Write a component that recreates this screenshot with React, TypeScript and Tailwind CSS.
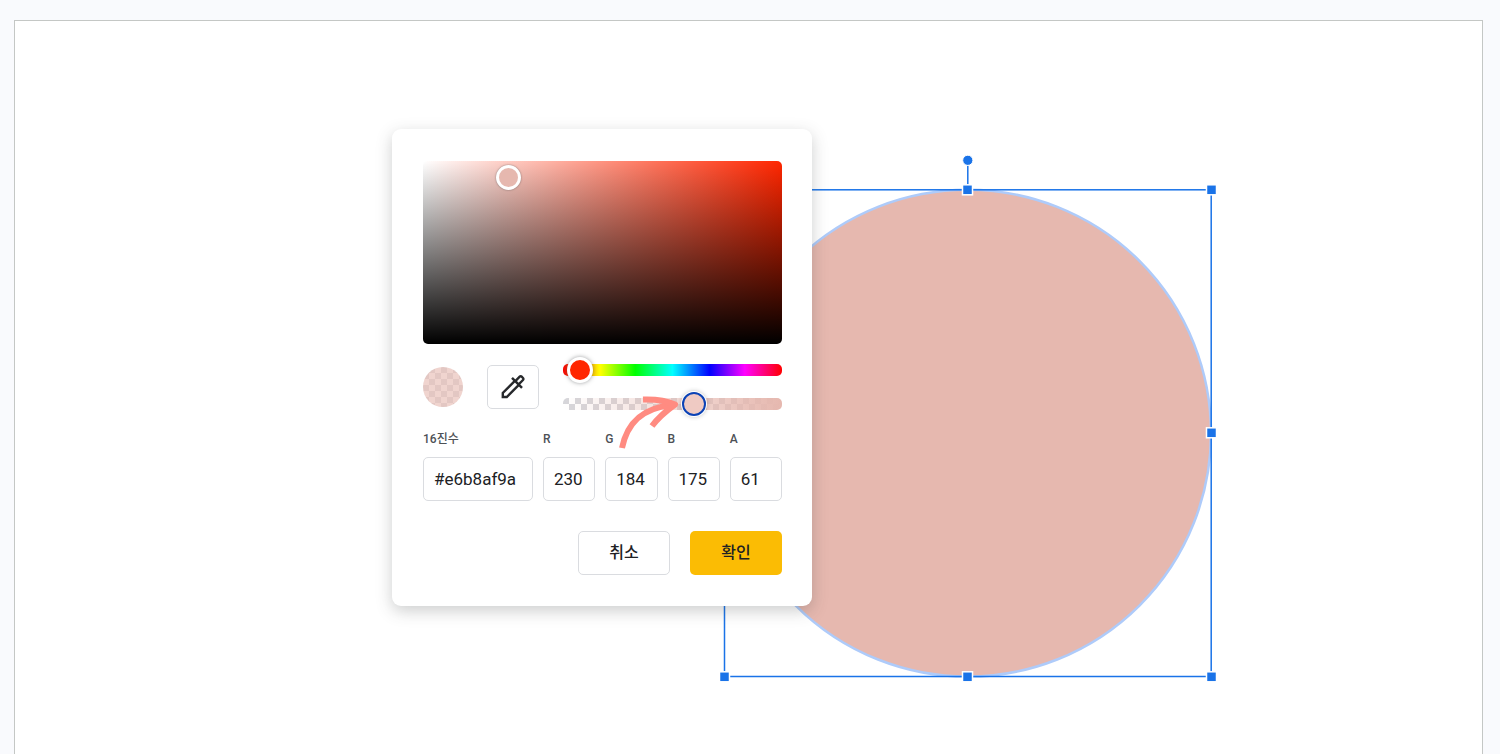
import { useState } from "react";

const HANDLES = [
  [10, 40],
  [253, 40],
  [497, 40],
  [10, 283],
  [497, 283],
  [10, 527],
  [253, 527],
  [497, 527],
];

function SelectedCircle() {
  return (
    <svg
      className="absolute left-[699px] top-[129px]"
      width="510"
      height="540"
      viewBox="0 0 510 540"
      aria-hidden="true"
    >
      <circle cx="253.6" cy="283.2" r="243.4" fill="#e6b8af" stroke="#aecbfa" strokeWidth="2.5" />
      <rect x="10.5" y="39.8" width="486.7" height="486.7" fill="none" stroke="#1a73e8" strokeWidth="1.5" />
      <path d="M253.8 16v20" stroke="#1a73e8" strokeWidth="1.5" />
      <circle cx="253.8" cy="10.3" r="5.1" fill="#1a73e8" stroke="#fff" />
      {HANDLES.map(([x, y]) => (
        <rect
          key={`${x}-${y}`}
          x={x - 4.5}
          y={y - 5.2}
          width="10"
          height="10"
          fill="#1a73e8"
          stroke="#fff"
          strokeWidth="1.5"
        />
      ))}
    </svg>
  );
}

function EyedropperIcon() {
  return (
    <svg width="26" height="26" viewBox="0 0 26 26" fill="none" stroke="#27292c" strokeWidth="2.4" aria-hidden="true">
      <path d="M14.6 7.2 2.8 19v4h4L18.6 11.2" />
      <path d="M12 3.8 22 13.8" />
      <path d="m15.6 6.8 4.1-4.1a1.4 1.4 0 0 1 2 0l1.3 1.3a1.4 1.4 0 0 1 0 2l-4.1 4.1" />
    </svg>
  );
}

function HintArrow() {
  return (
    <svg
      className="pointer-events-none absolute left-[223px] top-[261px]"
      width="68"
      height="64"
      viewBox="0 0 68 64"
      fill="none"
      stroke="#ff8b81"
      strokeWidth="6"
      aria-hidden="true"
    >
      <path d="M7 58C12 34 26 18 57 15" />
      <path d="M28 9.500C42 9 51 10.5 60 14.5C51 21 43 28 37 36" strokeLinejoin="round" />
    </svg>
  );
}

type FieldProps = {
  id: string;
  label: string;
  value: string;
  onChange: (value: string) => void;
};

function Field({ id, label, value, onChange }: FieldProps) {
  return (
    <div className="flex min-w-0 flex-col gap-2">
      <label htmlFor={id} className="text-xs leading-5 font-medium text-[#4d5156]">
        {label}
      </label>
      <input
        id={id}
        type="text"
        value={value}
        onChange={(e) => onChange(e.target.value)}
        className="h-11 w-full rounded-[5px] border border-[#dadce0] bg-white px-[10px] text-[17px] text-[#202124] outline-none focus:border-[#1a73e8]"
      />
    </div>
  );
}

export default function App() {
  const [hex, setHex] = useState("#e6b8af9a");
  const [red, setRed] = useState("230");
  const [green, setGreen] = useState("184");
  const [blue, setBlue] = useState("175");
  const [alpha, setAlpha] = useState("61");
  const [hue, setHue] = useState("8");

  return (
    <div className="flex min-h-screen flex-col bg-[#f9fafd] pt-5 pr-[17px] pl-[14px] font-[Roboto,'Noto_Sans_CJK_KR',sans-serif]">
      <main className="relative flex-1 overflow-hidden border border-b-0 border-[#c4c7c5] bg-white">
        <SelectedCircle />

        <section
          role="dialog"
          aria-label="맞춤 색상"
          className="absolute top-[108px] left-[377px] w-[420px] rounded-[9px] bg-white pt-8 pr-[30px] pb-[31px] pl-[31px] shadow-[0_5px_16px_rgba(60,64,67,0.26)]"
        >
          {/* Saturation / brightness */}
          <div className="relative h-[183px] rounded-[5px] bg-[linear-gradient(to_top,#000,transparent),linear-gradient(to_right,#fff,#ff2600)]">
            <button
              type="button"
              aria-label="채도 및 밝기"
              className="absolute top-1 left-[73px] size-[25px] rounded-full border-[3px] border-white bg-[#e6b8af] shadow-[0_0_2px_rgba(60,64,67,0.6)]"
            />
          </div>

          <div className="mt-5 flex items-center gap-6">
            <div className="size-10 shrink-0 rounded-full bg-[linear-gradient(#e6b8af9a,#e6b8af9a),repeating-conic-gradient(#dedee1_0_25%,#fff_0_50%)] bg-[length:100%_100%,12px_12px]" />
            <button
              type="button"
              aria-label="스포이트"
              className="flex h-11 w-[52px] shrink-0 items-center justify-center rounded-[5px] border border-[#dadce0] bg-white"
            >
              <EyedropperIcon />
            </button>
            <div className="flex min-w-0 flex-1 flex-col gap-[22px]">
              <input
                type="range"
                aria-label="색조"
                min="0"
                max="360"
                value={hue}
                onChange={(e) => setHue(e.target.value)}
                className="block h-3 w-full appearance-none rounded-[5px] bg-[linear-gradient(to_right,#f00,#ff0_17%,#0f0_33%,#0ff_50%,#00f_67%,#f0f_83%,#f00)] [&::-webkit-slider-thumb]:size-[26px] [&::-webkit-slider-thumb]:appearance-none [&::-webkit-slider-thumb]:rounded-full [&::-webkit-slider-thumb]:border-[3px] [&::-webkit-slider-thumb]:border-white [&::-webkit-slider-thumb]:bg-[#ff2600] [&::-webkit-slider-thumb]:shadow-[0_0_4px_rgba(60,64,67,0.5)]"
              />
              <input
                type="range"
                aria-label="투명도"
                min="0"
                max="100"
                value={alpha}
                onChange={(e) => setAlpha(e.target.value)}
                className="block h-3 w-full appearance-none rounded-[5px] bg-[linear-gradient(to_right,transparent,#e6b8af),repeating-conic-gradient(#fff_0_25%,#d6d6da_0_50%)] bg-[length:100%_100%,12px_12px] [&::-webkit-slider-thumb]:size-[24px] [&::-webkit-slider-thumb]:appearance-none [&::-webkit-slider-thumb]:rounded-full [&::-webkit-slider-thumb]:border-2 [&::-webkit-slider-thumb]:border-[#0b42b5] [&::-webkit-slider-thumb]:bg-[#efcac3] [&::-webkit-slider-thumb]:shadow-[0_0_0_1px_#fff,0_0_4px_1px_rgba(60,64,67,0.3)]"
              />
            </div>
          </div>

          <div className="mt-[19px] grid grid-cols-[110px_repeat(4,minmax(0,1fr))] gap-[10px]">
            <Field id="hex" label="16진수" value={hex} onChange={setHex} />
            <Field id="red" label="R" value={red} onChange={setRed} />
            <Field id="green" label="G" value={green} onChange={setGreen} />
            <Field id="blue" label="B" value={blue} onChange={setBlue} />
            <Field id="alpha" label="A" value={alpha} onChange={setAlpha} />
          </div>

          <div className="mt-[30px] flex justify-end gap-5">
            <button
              type="button"
              className="h-11 w-[92px] rounded-[5px] border border-[#dadce0] bg-white text-base font-medium text-[#202124]"
            >
              취소
            </button>
            <button
              type="button"
              className="h-11 w-[92px] rounded-[5px] bg-[#fbbc04] text-base font-medium text-[#202124]"
            >
              확인
            </button>
          </div>

          <HintArrow />
        </section>
      </main>
    </div>
  );
}
